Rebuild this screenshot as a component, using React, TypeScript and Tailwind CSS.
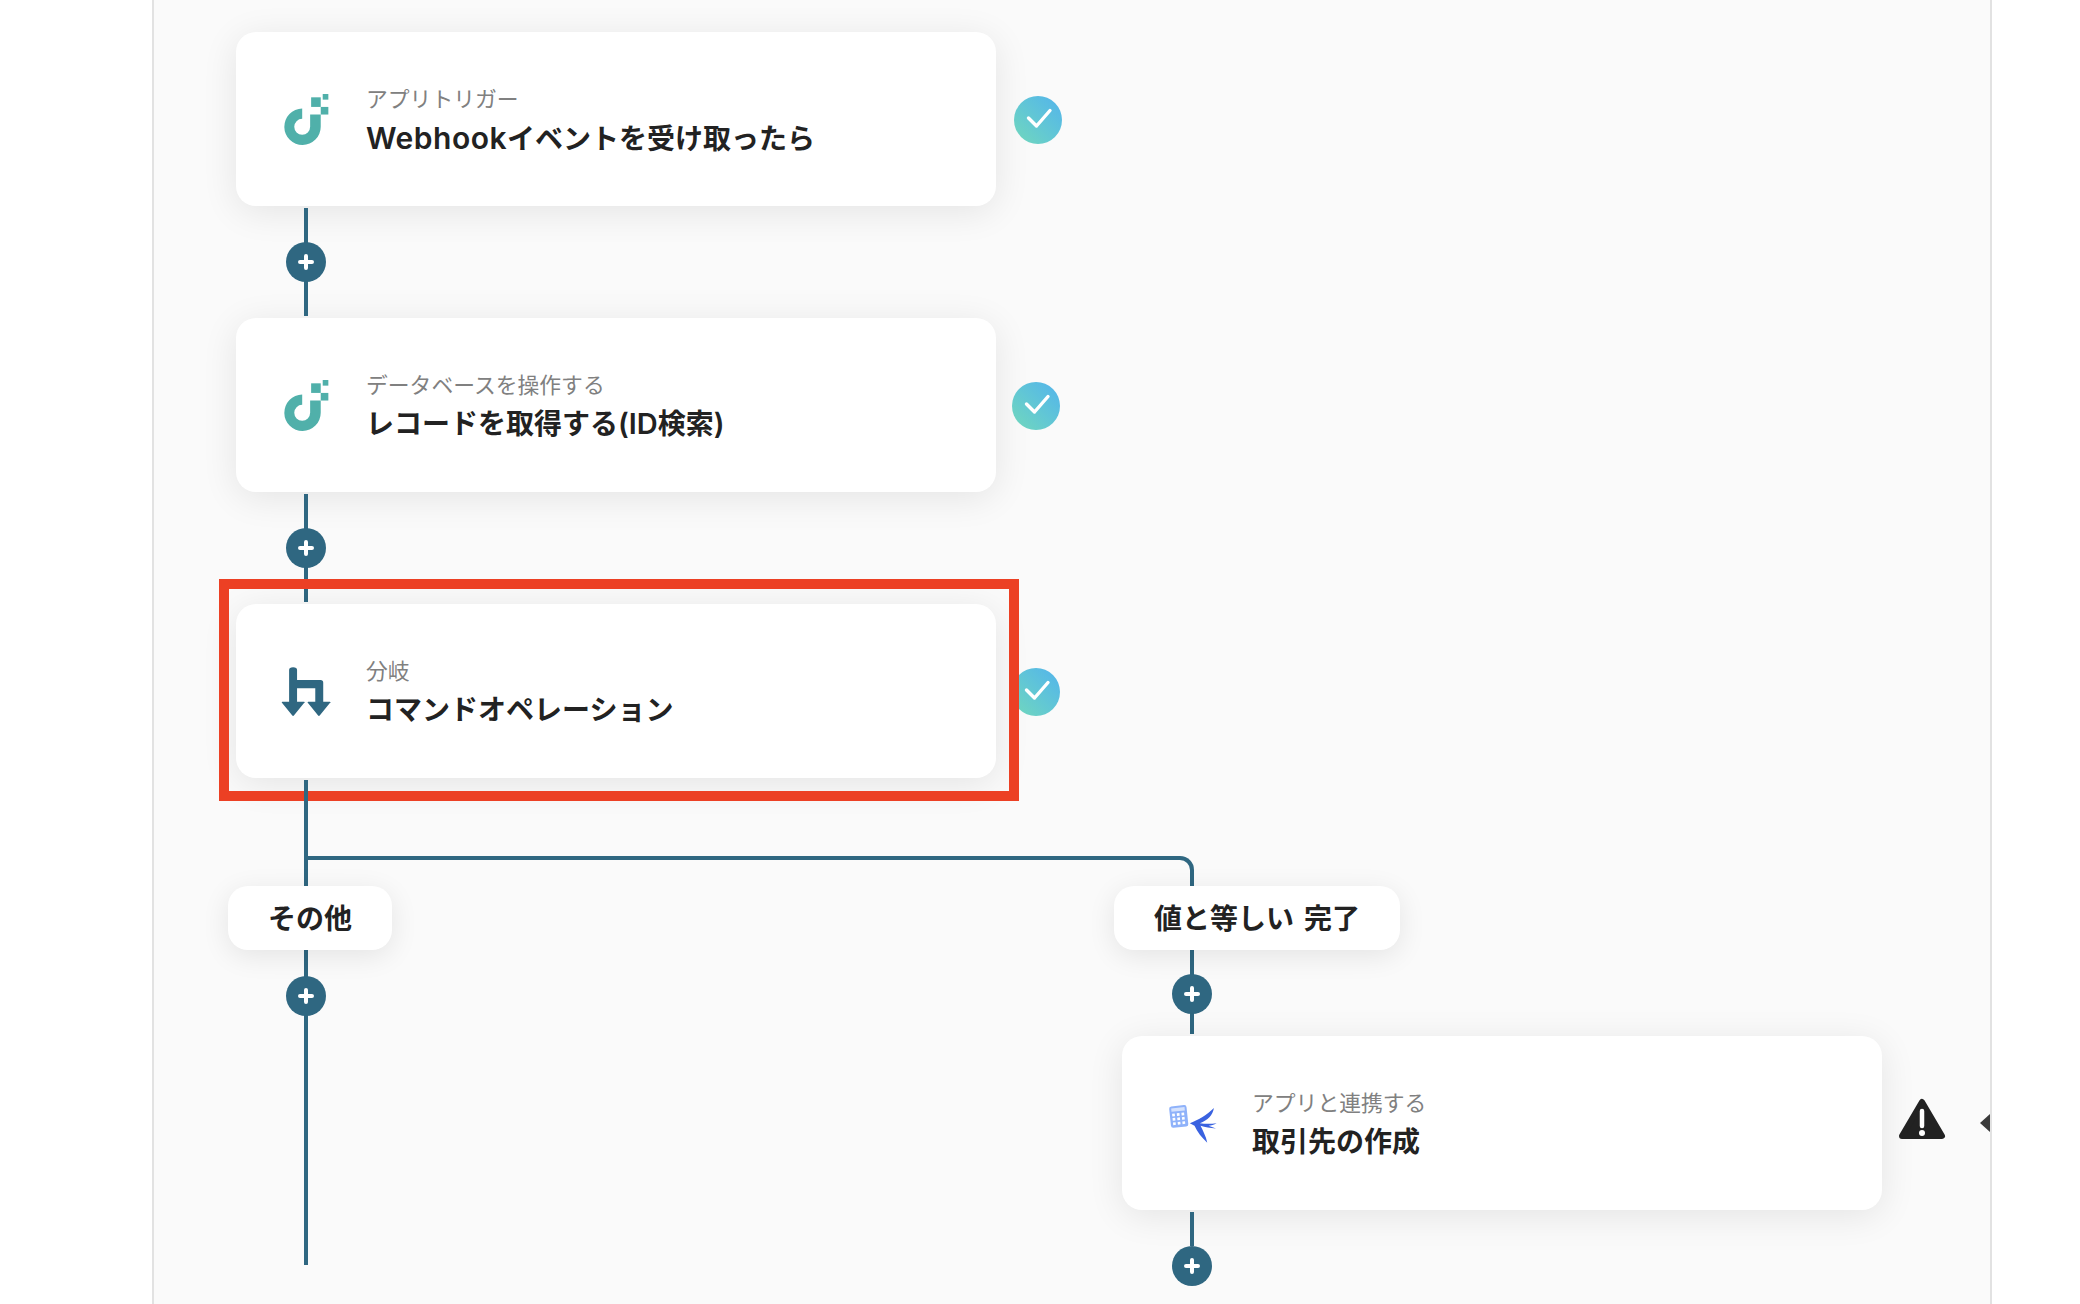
function YoomIcon() {
  return (
    <svg viewBox="155 218 145 164" className="h-[55px] w-[48px]" fill="#50b0aa">
      <path d="M216 267A55 55 0 1 0 272 322V285H240V322A24 24 0 1 1 216 298Z" />
      <rect x="243" y="233" width="29" height="29" />
      <rect x="278" y="223" width="17" height="17" />
      <rect x="272" y="262" width="23" height="23" />
    </svg>
  );
}

function BranchIcon() {
  return (
    <svg viewBox="210 285 156 160" className="h-[53px] w-[52px]" fill="#2f6781">
      <path d="M237 300a12 8 0 0 1 24 0V330H332a8 8 0 0 1 8 8V396H360a1 1 0 0 1 0 4L330 437a4 4 0 0 1-6 0L294 400a1 1 0 0 1 2-4H316V355H261V396H282a1 1 0 0 1 0 4L252 437a4 4 0 0 1-6 0L216 400a1 1 0 0 1 2-4H237Z" />
    </svg>
  );
}

function FreeeIcon() {
  return (
    <svg viewBox="140 190 152 122" className="h-[41px] w-[51px]">
      <g transform="rotate(-6 175 230)">
        <rect x="149" y="198" width="52" height="64" rx="7" fill="#8fb2fa" />
        <rect x="155" y="204" width="40" height="10" fill="#d5e2fd" />
        {[0, 1, 2].map((r) =>
          [0, 1, 2].map((c) => (
            <rect key={`${r}-${c}`} x={156 + c * 14} y={220 + r * 13} width="8" height="8" fill="#ffffff" />
          )),
        )}
      </g>
      <path
        d="M208 250C232 242 258 226 280 205C276 226 262 242 238 250C256 253 272 252 288 250C280 254 272 257 264 258L286 266C268 265 254 262 240 258C248 274 256 290 260 308C244 294 230 276 222 258Z"
        fill="#3a62e0"
      />
    </svg>
  );
}

function Check() {
  return (
    <div className="mt-[2px] flex h-12 w-12 shrink-0 items-center justify-center rounded-full bg-gradient-to-tr from-[#72d8bb] to-[#53b3ec]">
      <svg viewBox="0 0 48 48" className="h-12 w-12" fill="none" stroke="#ffffff" strokeWidth="3.4" strokeLinecap="round" strokeLinejoin="round">
        <path d="M15.5 24 L23.5 32 L37 16.5" transform="translate(-1 -2)" />
      </svg>
    </div>
  );
}

function Warning() {
  return (
    <svg viewBox="0 0 48 44" className="mb-[6px] h-[44px] w-[48px] shrink-0">
      <path d="M24 4 L44 38 H4 Z" fill="#222222" stroke="#222222" strokeWidth="6" strokeLinejoin="round" />
      <path d="M24 13 V28" stroke="#ffffff" strokeWidth="4.5" strokeLinecap="round" />
      <circle cx="24" cy="35" r="3" fill="#ffffff" />
    </svg>
  );
}

function Plus() {
  return (
    <div className="flex h-10 w-10 items-center justify-center rounded-full bg-[#2f6781]">
      <svg viewBox="0 0 16 16" className="h-4 w-4" stroke="#ffffff" strokeWidth="4" strokeLinecap="round">
        <path d="M8 2V14M2 8H14" />
      </svg>
    </div>
  );
}

function Connector() {
  return (
    <div className="relative ml-[68px] h-[108px] w-1 my-[2px] bg-[#2f6781]">
      <div className="absolute left-[-18px] top-[34px]">
        <Plus />
      </div>
    </div>
  );
}

function Card({ icon, label, title }: { icon: React.ReactNode; label: string; title: React.ReactNode }) {
  return (
    <div className="flex h-[174px] w-[760px] shrink-0 items-center gap-[30px] rounded-[20px] bg-white pl-[40px] shadow-[0_6px_36px_rgba(0,0,0,0.09)]">
      <div className="flex h-[60px] w-[60px] items-center justify-center">{icon}</div>
      <div className="flex translate-y-[1.5px] flex-col">
        <span className="text-[21.8px] leading-[30px] text-[#808080]">{label}</span>
        <span className="mt-1 text-[28px] font-semibold leading-[40px] text-[#222222]">{title}</span>
      </div>
    </div>
  );
}

function Pill({ children }: { children: React.ReactNode }) {
  return (
    <div className="relative ml-[-8px] flex h-16 w-fit items-center whitespace-pre rounded-[20px] bg-white px-10 pt-[2px] text-[28px] font-semibold text-[#222222] [word-spacing:3px] shadow-[0_6px_28px_rgba(0,0,0,0.09)]">
      {children}
    </div>
  );
}

export default function App() {
  return (
    <div
      className="h-[1304px] w-[2080px] overflow-hidden bg-white"
      style={{ fontFamily: '"Inter", "Noto Sans CJK JP", sans-serif' }}
    >
      <div className="relative ml-[152px] h-full w-[1840px] border-x-2 border-[#e2e2e2] bg-[#fafafa] pl-[82px] pt-8">
        <div className="flex items-center gap-[18px]">
          <Card
            icon={<YoomIcon />}
            label="アプリトリガー"
            title={
              <>
                <span className="text-[30px] tracking-[0.5px]">Webhook</span>イベントを受け取ったら
              </>
            }
          />
          <Check />
        </div>
        <Connector />
        <div className="flex items-center gap-4">
          <Card
            icon={<YoomIcon />}
            label="データベースを操作する"
            title={
              <>
                レコードを取得する<span className="text-[29px]">(ID</span>検索<span className="text-[29px]">)</span>
              </>
            }
          />
          <Check />
        </div>
        <Connector />
        <div className="relative flex items-center gap-4">
          <Card icon={<BranchIcon />} label="分岐" title="コマンドオペレーション" />
          <Check />
          {/* red annotation frame over the step */}
          <div className="absolute left-[-17px] top-[-25px] h-[222px] w-[800px] border-[10px] border-[#ec4024]" />
        </div>

        <div className="relative flex">
          <div className="absolute left-[72px] top-[78px] h-[30px] w-[886px] rounded-tr-[14px] border-r-4 border-t-4 border-[#2f6781]" />
          <div className="relative w-[886px] pt-[108px]">
            <div className="absolute left-[68px] top-[2px] h-[485px] w-1 bg-[#2f6781]" />
            <Pill>その他</Pill>
            <div className="relative ml-[50px] mt-[26px] w-fit">
              <Plus />
            </div>
          </div>
          <div className="relative pt-[108px]">
            <div className="absolute left-[68px] top-[108px] h-[148px] w-1 bg-[#2f6781]" />
            <Pill>値と等しい 完了</Pill>
            <div className="relative ml-[50px] mt-6 w-fit">
              <Plus />
            </div>
            <div className="relative mt-[22px] flex items-center">
              <Card icon={<FreeeIcon />} label="アプリと連携する" title="取引先の作成" />
              <div className="ml-4">
                <Warning />
              </div>
              <div className="ml-[34px] h-0 w-0 border-y-[9px] border-r-[10px] border-y-transparent border-r-[#3a3a3a]" />
            </div>
            <div className="relative ml-[68px] mt-[2px] h-[34px] w-1 bg-[#2f6781]">
              <div className="absolute left-[-18px] top-[34px]">
                <Plus />
              </div>
            </div>
          </div>
        </div>
      </div>
    </div>
  );
}
